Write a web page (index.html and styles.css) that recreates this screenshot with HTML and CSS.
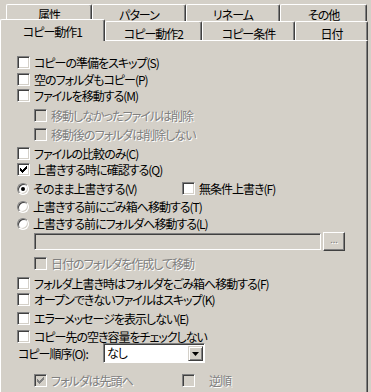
FILE: index.html
```html
<!DOCTYPE html>
<html lang="ja">

<head>
    <meta charset="UTF-8">
    <meta name="viewport" content="width=device-width, initial-scale=1.0">
    <title>コピー動作</title>
    <link rel="stylesheet" href="styles.css">
</head>

<body>
    <div class="dialog">
        <div class="tabs">
            <div class="tab_row back">
                <div class="tab">属性</div>
                <div class="tab">パターン</div>
                <div class="tab">リネーム</div>
                <div class="tab">その他</div>
            </div>
            <div class="tab_row front">
                <div class="tab current">コピー動作1</div>
                <div class="tab">コピー動作2</div>
                <div class="tab">コピー条件</div>
                <div class="tab">日付</div>
            </div>
        </div>
        <div class="panel">
            <div class="row g0"><span class="cb"></span>コピーの準備をスキップ(S)</div>
            <div class="row g4"><span class="cb"></span>空のフォルダもコピー(P)</div>
            <div class="row g3"><span class="cb"></span>ファイルを移動する(M)</div>
            <div class="row g7 sub disabled"><span class="cb"></span>移動しなかったファイルは削除</div>
            <div class="row g6 sub disabled"><span class="cb"></span>移動後のフォルダは削除しない</div>
            <div class="row g6"><span class="cb"></span>ファイルの比較のみ(C)</div>
            <div class="row g3"><span class="cb checked"><svg width="13" height="13" viewBox="0 0 13 13"><path d="M3 5h1v3H3zM4 6h1v3H4zM5 7h1v3H5zM6 6h1v3H6zM7 5h1v3H7zM8 4h1v3H8zM9 3h1v3H9z"/></svg></span>上書きする時に確認する(Q)</div>
            <div class="row g6 split">
                <div class="item"><span class="rb on"></span>そのまま上書きする(V)</div>
                <div class="item"><span class="cb"></span>無条件上書き(F)</div>
            </div>
            <div class="row g5"><span class="rb"></span>上書きする前にごみ箱へ移動する(T)</div>
            <div class="row g4"><span class="rb"></span>上書きする前にフォルダへ移動する(L)</div>
            <div class="path_row">
                <div class="field"></div>
                <div class="btn">...</div>
            </div>
            <div class="row g6 sub disabled"><span class="cb"></span>日付のフォルダを作成して移動</div>
            <div class="row g7"><span class="cb"></span>フォルダ上書き時はフォルダをごみ箱へ移動する(F)</div>
            <div class="row g3"><span class="cb"></span>オープンできないファイルはスキップ(K)</div>
            <div class="row g6"><span class="cb"></span>エラーメッセージを表示しない(E)</div>
            <div class="row g5"><span class="cb"></span>コピー先の空き容量をチェックしない</div>
            <div class="order_row">
                <span class="label">コピー順序(O):</span>
                <div class="select">
                    <span class="value">なし</span>
                    <span class="arrow"><svg width="7" height="4" viewBox="0 0 7 4"><path d="M0 0h7L3.5 4z"/></svg></span>
                </div>
            </div>
            <div class="row g11 split">
                <div class="item sub disabled"><span class="cb checked"><svg width="13" height="13" viewBox="0 0 13 13"><path d="M3 5h1v3H3zM4 6h1v3H4zM5 7h1v3H5zM6 6h1v3H6zM7 5h1v3H7zM8 4h1v3H8zM9 3h1v3H9z"/></svg></span>フォルダは先頭へ</div>
                <div class="item disabled"><span class="cb"></span>逆順</div>
            </div>
        </div>
    </div>
</body>

</html>
```

FILE: styles.css
```css
* {
    margin: 0;
    padding: 0;
    box-sizing: border-box;
}

body {
    width: 371px;
    height: 392px;
    overflow: hidden;
    background-color: #d4d0c8;
    font-family: "Noto Sans CJK JP", "DejaVu Sans", sans-serif;
    font-size: 12px;
    font-feature-settings: "palt" 1;
    letter-spacing: -1px;
    line-height: 13px;
    color: #000;
}

/* タブ */
.tabs {
    height: 40px;
    padding-top: 4px;
}

.tab_row {
    display: flex;
}

.tab_row.back {
    height: 17px;
    margin-left: 6px;
}

.tab_row.front {
    height: 19px;
}

.tab {
    height: 100%;
    border-top: 1px solid #fff;
    border-left: 1px solid #fff;
    border-right: 1px solid #404040;
    border-radius: 2px 2px 0 0;
    box-shadow: inset -1px 0 #808080;
    text-align: center;
    padding-top: 3px;
    background-color: #d4d0c8;
}

.back .tab:nth-child(1) { width: 86px; }
.back .tab:nth-child(2) { width: 94px; }
.back .tab:nth-child(3) { width: 94px; }
.back .tab:nth-child(4) { width: 87px; }

.front .tab:nth-child(1) { width: 105px; }
.front .tab:nth-child(2) { width: 97px; padding-top: 5px; }
.front .tab:nth-child(3) { width: 93px; padding-top: 5px; }
.front .tab:nth-child(4) { width: 73px; padding-top: 5px; }

.front .current {
    position: relative;
    z-index: 1;
    height: 22px;
    margin-top: -2px;
    padding-top: 5px;
}

/* パネル */
.panel {
    width: 368px;
    height: 352px;
    border-top: 1px solid #fff;
    border-left: 1px solid #fff;
    border-right: 1px solid #404040;
    box-shadow: inset -1px 0 #808080;
    padding: 15px 0 0 16px;
}

.row {
    display: flex;
    align-items: center;
    height: 13px;
    gap: 4px;
    white-space: nowrap;
}

.g0 { margin-top: 0; }
.g3 { margin-top: 3px; }
.g4 { margin-top: 4px; }
.g5 { margin-top: 5px; }
.g6 { margin-top: 6px; }
.g7 { margin-top: 7px; }
.g11 { margin-top: 11px; }

.sub {
    padding-left: 17px;
}

.split {
    display: grid;
    grid-template-columns: 161px auto;
}

.split .item {
    display: flex;
    align-items: center;
    gap: 4px;
}

.split .item.disabled:last-child {
    gap: 14px;
}

.disabled {
    color: #808080;
    text-shadow: 1px 1px 0 #fff;
}

/* チェックボックス */
.cb {
    flex: none;
    width: 13px;
    height: 13px;
    background-color: #fff;
    border: 1px solid;
    border-color: #808080 #fff #fff #808080;
    box-shadow: inset 1px 1px #404040, inset -1px -1px #d4d0c8;
    position: relative;
}

.cb svg {
    position: absolute;
    left: -1px;
    top: -1px;
    fill: #000;
}

.disabled .cb {
    background-color: #d4d0c8;
}

.disabled .cb svg {
    fill: #808080;
}

/* ラジオボタン */
.rb {
    flex: none;
    width: 12px;
    height: 12px;
    border-radius: 50%;
    background-color: #fff;
    border: 1px solid;
    border-color: #808080 #fff #fff #808080;
    box-shadow: inset 1px 1px #404040, inset -1px -1px #d4d0c8;
    position: relative;
}

.rb.on::after {
    content: "";
    position: absolute;
    left: 3px;
    top: 3px;
    width: 4px;
    height: 4px;
    border-radius: 50%;
    background-color: #000;
}

/* フォルダ指定 */
.path_row {
    display: flex;
    align-items: center;
    gap: 2px;
    margin-top: 2px;
    padding-left: 17px;
    height: 19px;
}

.field {
    width: 287px;
    height: 17px;
    border: 1px solid;
    border-color: #808080 #fff #fff #808080;
    box-shadow: inset 1px 1px #404040, inset -1px -1px #d4d0c8;
    background-color: #d4d0c8;
}

.btn {
    width: 22px;
    height: 19px;
    border: 1px solid;
    border-color: #fff #404040 #404040 #fff;
    box-shadow: inset -1px -1px #808080;
    text-align: center;
    font-size: 9px;
    letter-spacing: 0;
    line-height: 14px;
    color: #808080;
    text-shadow: 1px 1px 0 #fff;
}

/* コピー順序 */
.order_row {
    display: flex;
    align-items: center;
    height: 20px;
    margin-top: 0;
}

.order_row .label {
    width: 86px;
    padding-left: 1px;
}

.select {
    display: flex;
    width: 102px;
    height: 20px;
    border: 1px solid;
    border-color: #808080 #fff #fff #808080;
    box-shadow: inset 1px 1px #404040;
    background-color: #fff;
    padding: 2px 1px 1px 2px;
}

.select .value {
    flex: 1;
    padding-left: 1px;
    line-height: 14px;
}

.select .arrow {
    width: 15px;
    height: 15px;
    background-color: #d4d0c8;
    border: 1px solid;
    border-color: #d4d0c8 #404040 #404040 #d4d0c8;
    box-shadow: inset 1px 1px #fff, inset -1px -1px #808080;
    display: flex;
    align-items: center;
    justify-content: center;
}
```
